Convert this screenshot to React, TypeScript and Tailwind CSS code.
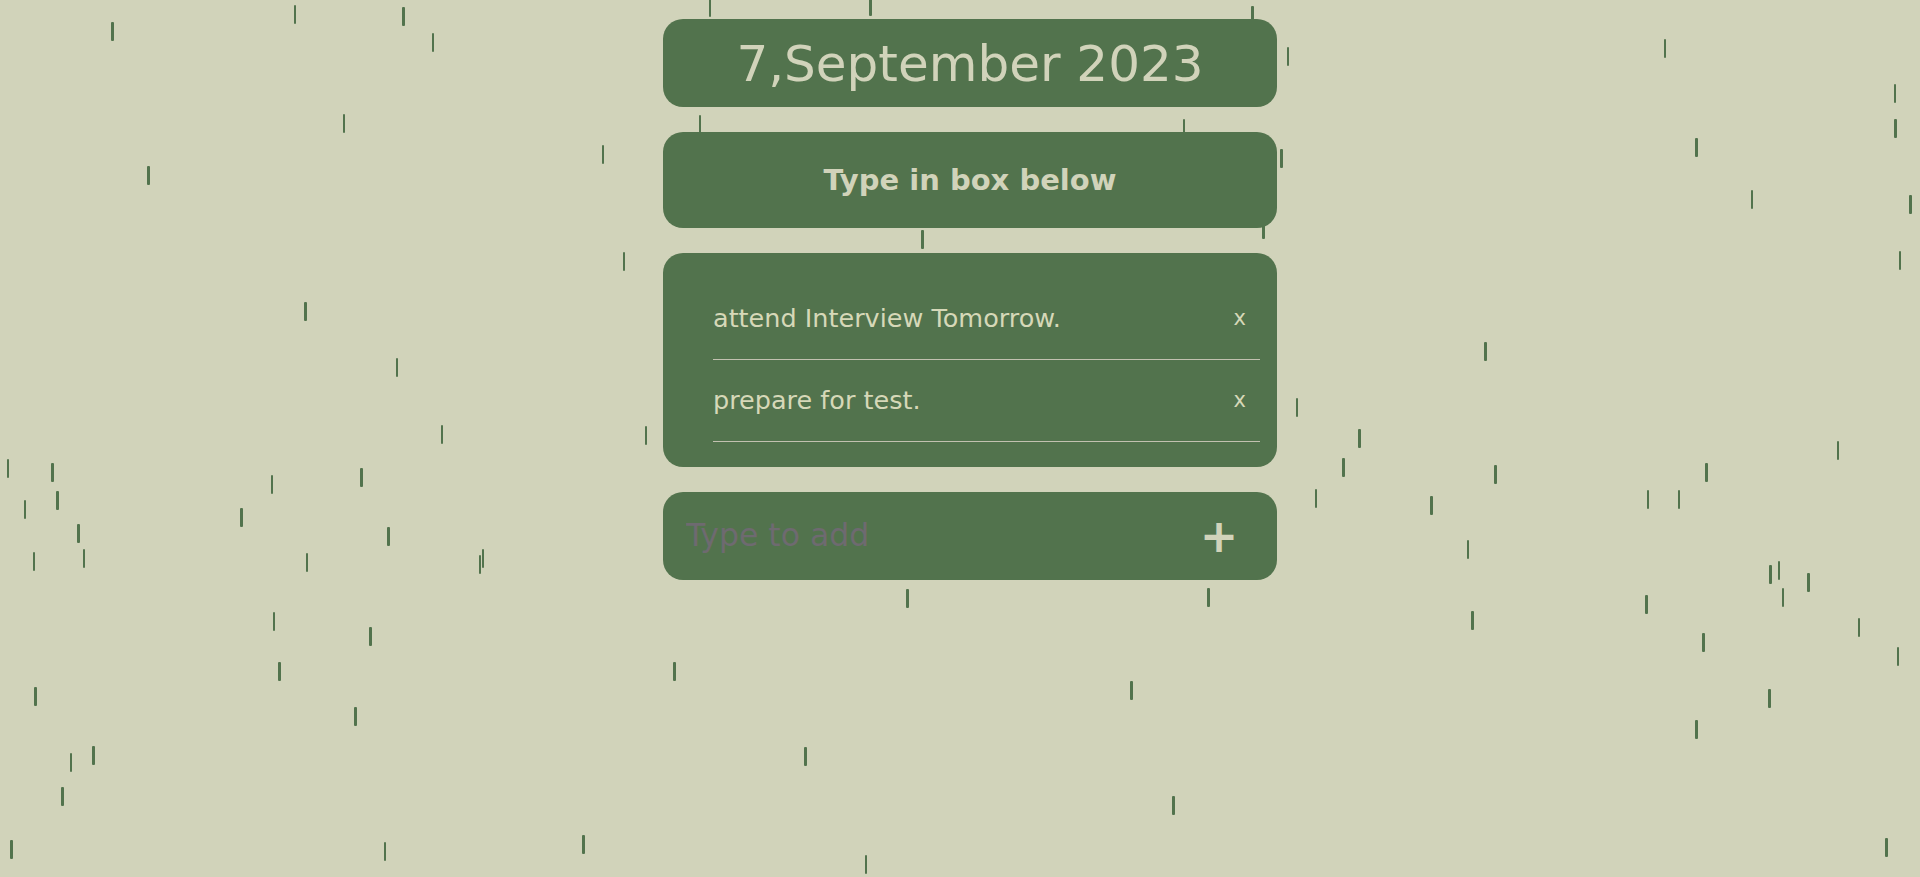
import { useState } from "react";

type Drop = { x: number; y: number; w: number };

// raindrops scattered on the background
const drops: Drop[] = [
  { x: 111, y: 22, w: 3 }, { x: 294, y: 5, w: 2 }, { x: 402, y: 7, w: 3 }, { x: 432, y: 33, w: 2 },
  { x: 709, y: -2, w: 2 }, { x: 869, y: -3, w: 3 }, { x: 1251, y: 6, w: 3 }, { x: 1287, y: 47, w: 2 },
  { x: 343, y: 114, w: 2 }, { x: 147, y: 166, w: 3 }, { x: 699, y: 115, w: 2 }, { x: 602, y: 145, w: 2 },
  { x: 1183, y: 119, w: 2 }, { x: 1280, y: 149, w: 3 }, { x: 1664, y: 39, w: 2 }, { x: 1894, y: 84, w: 2 },
  { x: 1894, y: 119, w: 3 }, { x: 1695, y: 138, w: 3 }, { x: 1751, y: 190, w: 2 }, { x: 1909, y: 195, w: 3 },
  { x: 1899, y: 251, w: 2 }, { x: 623, y: 252, w: 2 }, { x: 921, y: 230, w: 3 }, { x: 1262, y: 220, w: 3 },
  { x: 304, y: 302, w: 3 }, { x: 396, y: 358, w: 2 }, { x: 1484, y: 342, w: 3 }, { x: 1296, y: 398, w: 2 },
  { x: 1358, y: 429, w: 3 }, { x: 645, y: 426, w: 2 }, { x: 441, y: 425, w: 2 }, { x: 1837, y: 441, w: 2 },
  { x: 1705, y: 463, w: 3 }, { x: 1342, y: 458, w: 3 }, { x: 1494, y: 465, w: 3 }, { x: 7, y: 459, w: 2 },
  { x: 51, y: 463, w: 3 }, { x: 271, y: 475, w: 2 }, { x: 360, y: 468, w: 3 }, { x: 1315, y: 489, w: 2 },
  { x: 1430, y: 496, w: 3 }, { x: 1647, y: 490, w: 2 }, { x: 1678, y: 490, w: 2 }, { x: 24, y: 500, w: 2 },
  { x: 56, y: 491, w: 3 }, { x: 240, y: 508, w: 3 }, { x: 77, y: 524, w: 3 }, { x: 387, y: 527, w: 3 },
  { x: 1467, y: 540, w: 2 }, { x: 33, y: 552, w: 2 }, { x: 83, y: 549, w: 2 }, { x: 306, y: 553, w: 2 },
  { x: 479, y: 555, w: 2 }, { x: 482, y: 549, w: 2 }, { x: 1769, y: 565, w: 3 }, { x: 1778, y: 561, w: 2 },
  { x: 1807, y: 573, w: 3 }, { x: 1782, y: 588, w: 2 }, { x: 906, y: 589, w: 3 }, { x: 1207, y: 588, w: 3 },
  { x: 1471, y: 611, w: 3 }, { x: 1645, y: 595, w: 3 }, { x: 1858, y: 618, w: 2 }, { x: 1702, y: 633, w: 3 },
  { x: 1897, y: 647, w: 2 }, { x: 273, y: 612, w: 2 }, { x: 369, y: 627, w: 3 }, { x: 278, y: 662, w: 3 },
  { x: 673, y: 662, w: 3 }, { x: 1130, y: 681, w: 3 }, { x: 34, y: 687, w: 3 }, { x: 1768, y: 689, w: 3 },
  { x: 354, y: 707, w: 3 }, { x: 1695, y: 720, w: 3 }, { x: 804, y: 747, w: 3 }, { x: 70, y: 753, w: 2 },
  { x: 92, y: 746, w: 3 }, { x: 61, y: 787, w: 3 }, { x: 1172, y: 796, w: 3 }, { x: 10, y: 840, w: 3 },
  { x: 384, y: 842, w: 2 }, { x: 582, y: 835, w: 3 }, { x: 865, y: 855, w: 2 }, { x: 1885, y: 838, w: 3 },
];

export default function App() {
  const [todos] = useState(["attend Interview Tomorrow.", "prepare for test."]);

  return (
    <main className="relative w-full h-[877px] overflow-hidden bg-[#d1d3ba] font-['DejaVu_Sans',sans-serif]">
      <div className="absolute inset-0">
        {drops.map((d, i) => (
          <span
            key={i}
            className="absolute h-[19px] bg-[#52734d] rounded-[1px]"
            style={{ left: d.x, top: d.y, width: d.w }}
          />
        ))}
      </div>

      <section className="relative z-10 flex flex-col items-center gap-[25px] pt-[19px] pl-[20px]">
        <div className="w-[614px] h-[88px] rounded-[20px] bg-[#52734d] flex items-center justify-center pt-[2px]">
          <h1 className="text-[50px] leading-none text-[#d1d3ba]">7,September 2023</h1>
        </div>

        <div className="w-[614px] h-[96px] rounded-[20px] bg-[#52734d] flex items-center justify-center pt-[2px]">
          <h2 className="text-[29px] font-bold text-[#d1d3ba]">Type in box below</h2>
        </div>

        <div className="w-[614px] rounded-[20px] bg-[#52734d] pt-[25px] pb-[25px] pl-[50px] pr-[17px]">
          <ul>
            {todos.map((t) => (
              <li
                key={t}
                className="h-[82px] border-b border-[#c2c1b0] flex items-center justify-between"
              >
                <span className="text-[25.5px] text-[#d6d8b8]">{t}</span>
                <span className="text-[21px] text-[#d6d8b8] pr-[14px]">x</span>
              </li>
            ))}
          </ul>
        </div>

        <div className="w-[614px] h-[88px] rounded-[20px] bg-[#52734d] flex items-center pl-[23px] pr-[38px]">
          <input
            className="flex-1 bg-transparent outline-none text-[31.5px] text-[#d1d3ba] placeholder:text-[#6e6a70]"
            placeholder="Type to add"
          />
          <button className="w-[40px] text-center text-[46px] font-bold leading-none text-[#d1d3ba]">+</button>
        </div>
      </section>
    </main>
  );
}
